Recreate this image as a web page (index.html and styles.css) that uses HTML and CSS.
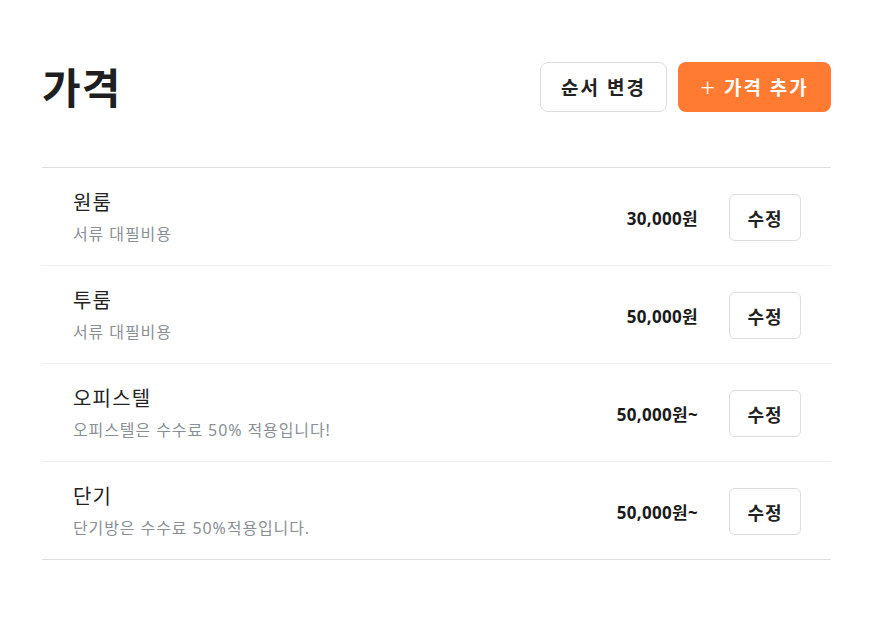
FILE: index.html
```html
<!DOCTYPE html>
<html lang="ko">
<head>
    <meta charset="UTF-8">
    <meta name="viewport" content="width=device-width, initial-scale=1.0">
    <title>가격</title>
    <link rel="stylesheet" href="styles.css">
</head>
<body>
    <main class="page">
        <header class="page-header">
            <h1>가격</h1>
            <div class="actions">
                <button class="btn btn-outline">순서 변경</button>
                <button class="btn btn-primary"><span class="plus">+</span> 가격 추가</button>
            </div>
        </header>

        <ul class="price-list">
            <li class="price-item">
                <div class="info">
                    <div class="name">원룸</div>
                    <div class="desc">서류 대필비용</div>
                </div>
                <div class="price">30,000원</div>
                <button class="btn btn-edit">수정</button>
            </li>
            <li class="price-item">
                <div class="info">
                    <div class="name">투룸</div>
                    <div class="desc">서류 대필비용</div>
                </div>
                <div class="price">50,000원</div>
                <button class="btn btn-edit">수정</button>
            </li>
            <li class="price-item">
                <div class="info">
                    <div class="name">오피스텔</div>
                    <div class="desc">오피스텔은 수수료 50% 적용입니다!</div>
                </div>
                <div class="price">50,000원~</div>
                <button class="btn btn-edit">수정</button>
            </li>
            <li class="price-item">
                <div class="info">
                    <div class="name">단기</div>
                    <div class="desc">단기방은 수수료 50%적용입니다.</div>
                </div>
                <div class="price">50,000원~</div>
                <button class="btn btn-edit">수정</button>
            </li>
        </ul>
    </main>
</body>
</html>
```

FILE: styles.css
```css
body {
    margin: 0;
    background-color: #fff;
    color: #222;
    font-family: "Noto Sans", "Noto Sans CJK KR", sans-serif;
}

.page {
    padding: 62px 56px 0 42px;
}

.page-header {
    display: flex;
    justify-content: space-between;
    align-items: center;
    margin-bottom: 55px;
}

h1 {
    margin: 0;
    font-size: 42px;
    font-weight: 700;
    letter-spacing: 1px;
    color: #1f1f1f;
    line-height: 49px;
}

.actions {
    display: flex;
    gap: 11px;
}

.btn {
    font-family: inherit;
    cursor: pointer;
    border-radius: 8px;
    font-weight: 700;
}

.btn-outline {
    height: 50px;
    width: 127px;
    background-color: #fff;
    border: 1px solid #dcdcdc;
    color: #222;
    font-size: 19px;
    letter-spacing: 2px;
}

.btn-primary {
    height: 50px;
    width: 153px;
    background-color: #ff7b31;
    border: none;
    color: #fff;
    font-size: 19px;
    letter-spacing: 2px;
}

.plus {
    font-weight: 300;
    font-size: 26px;
    line-height: 1;
    vertical-align: -2px;
}

.price-list {
    list-style: none;
    margin: 0;
    padding: 0;
    border-top: 1px solid #dedede;
    border-bottom: 1px solid #dedede;
}

.price-item {
    display: flex;
    align-items: center;
    padding: 23px 30px 21px 31px;
}

.price-item + .price-item {
    border-top: 1px solid #f0f0f0;
}

.info {
    flex: 1;
}

.name {
    font-size: 20px;
    letter-spacing: 1.2px;
    color: #222;
    line-height: 24px;
}

.desc {
    margin-top: 9px;
    font-size: 16px;
    letter-spacing: 0.9px;
    color: #8a8f96;
    line-height: 20px;
}

.price {
    font-size: 17px;
    font-weight: 700;
    letter-spacing: 0.3px;
    color: #1a1a1a;
    margin-right: 31px;
}

.btn-edit {
    width: 72px;
    height: 47px;
    background-color: #fff;
    border: 1px solid #dcdcdc;
    border-radius: 6px;
    color: #222;
    font-size: 18px;
    letter-spacing: 1px;
}
```
